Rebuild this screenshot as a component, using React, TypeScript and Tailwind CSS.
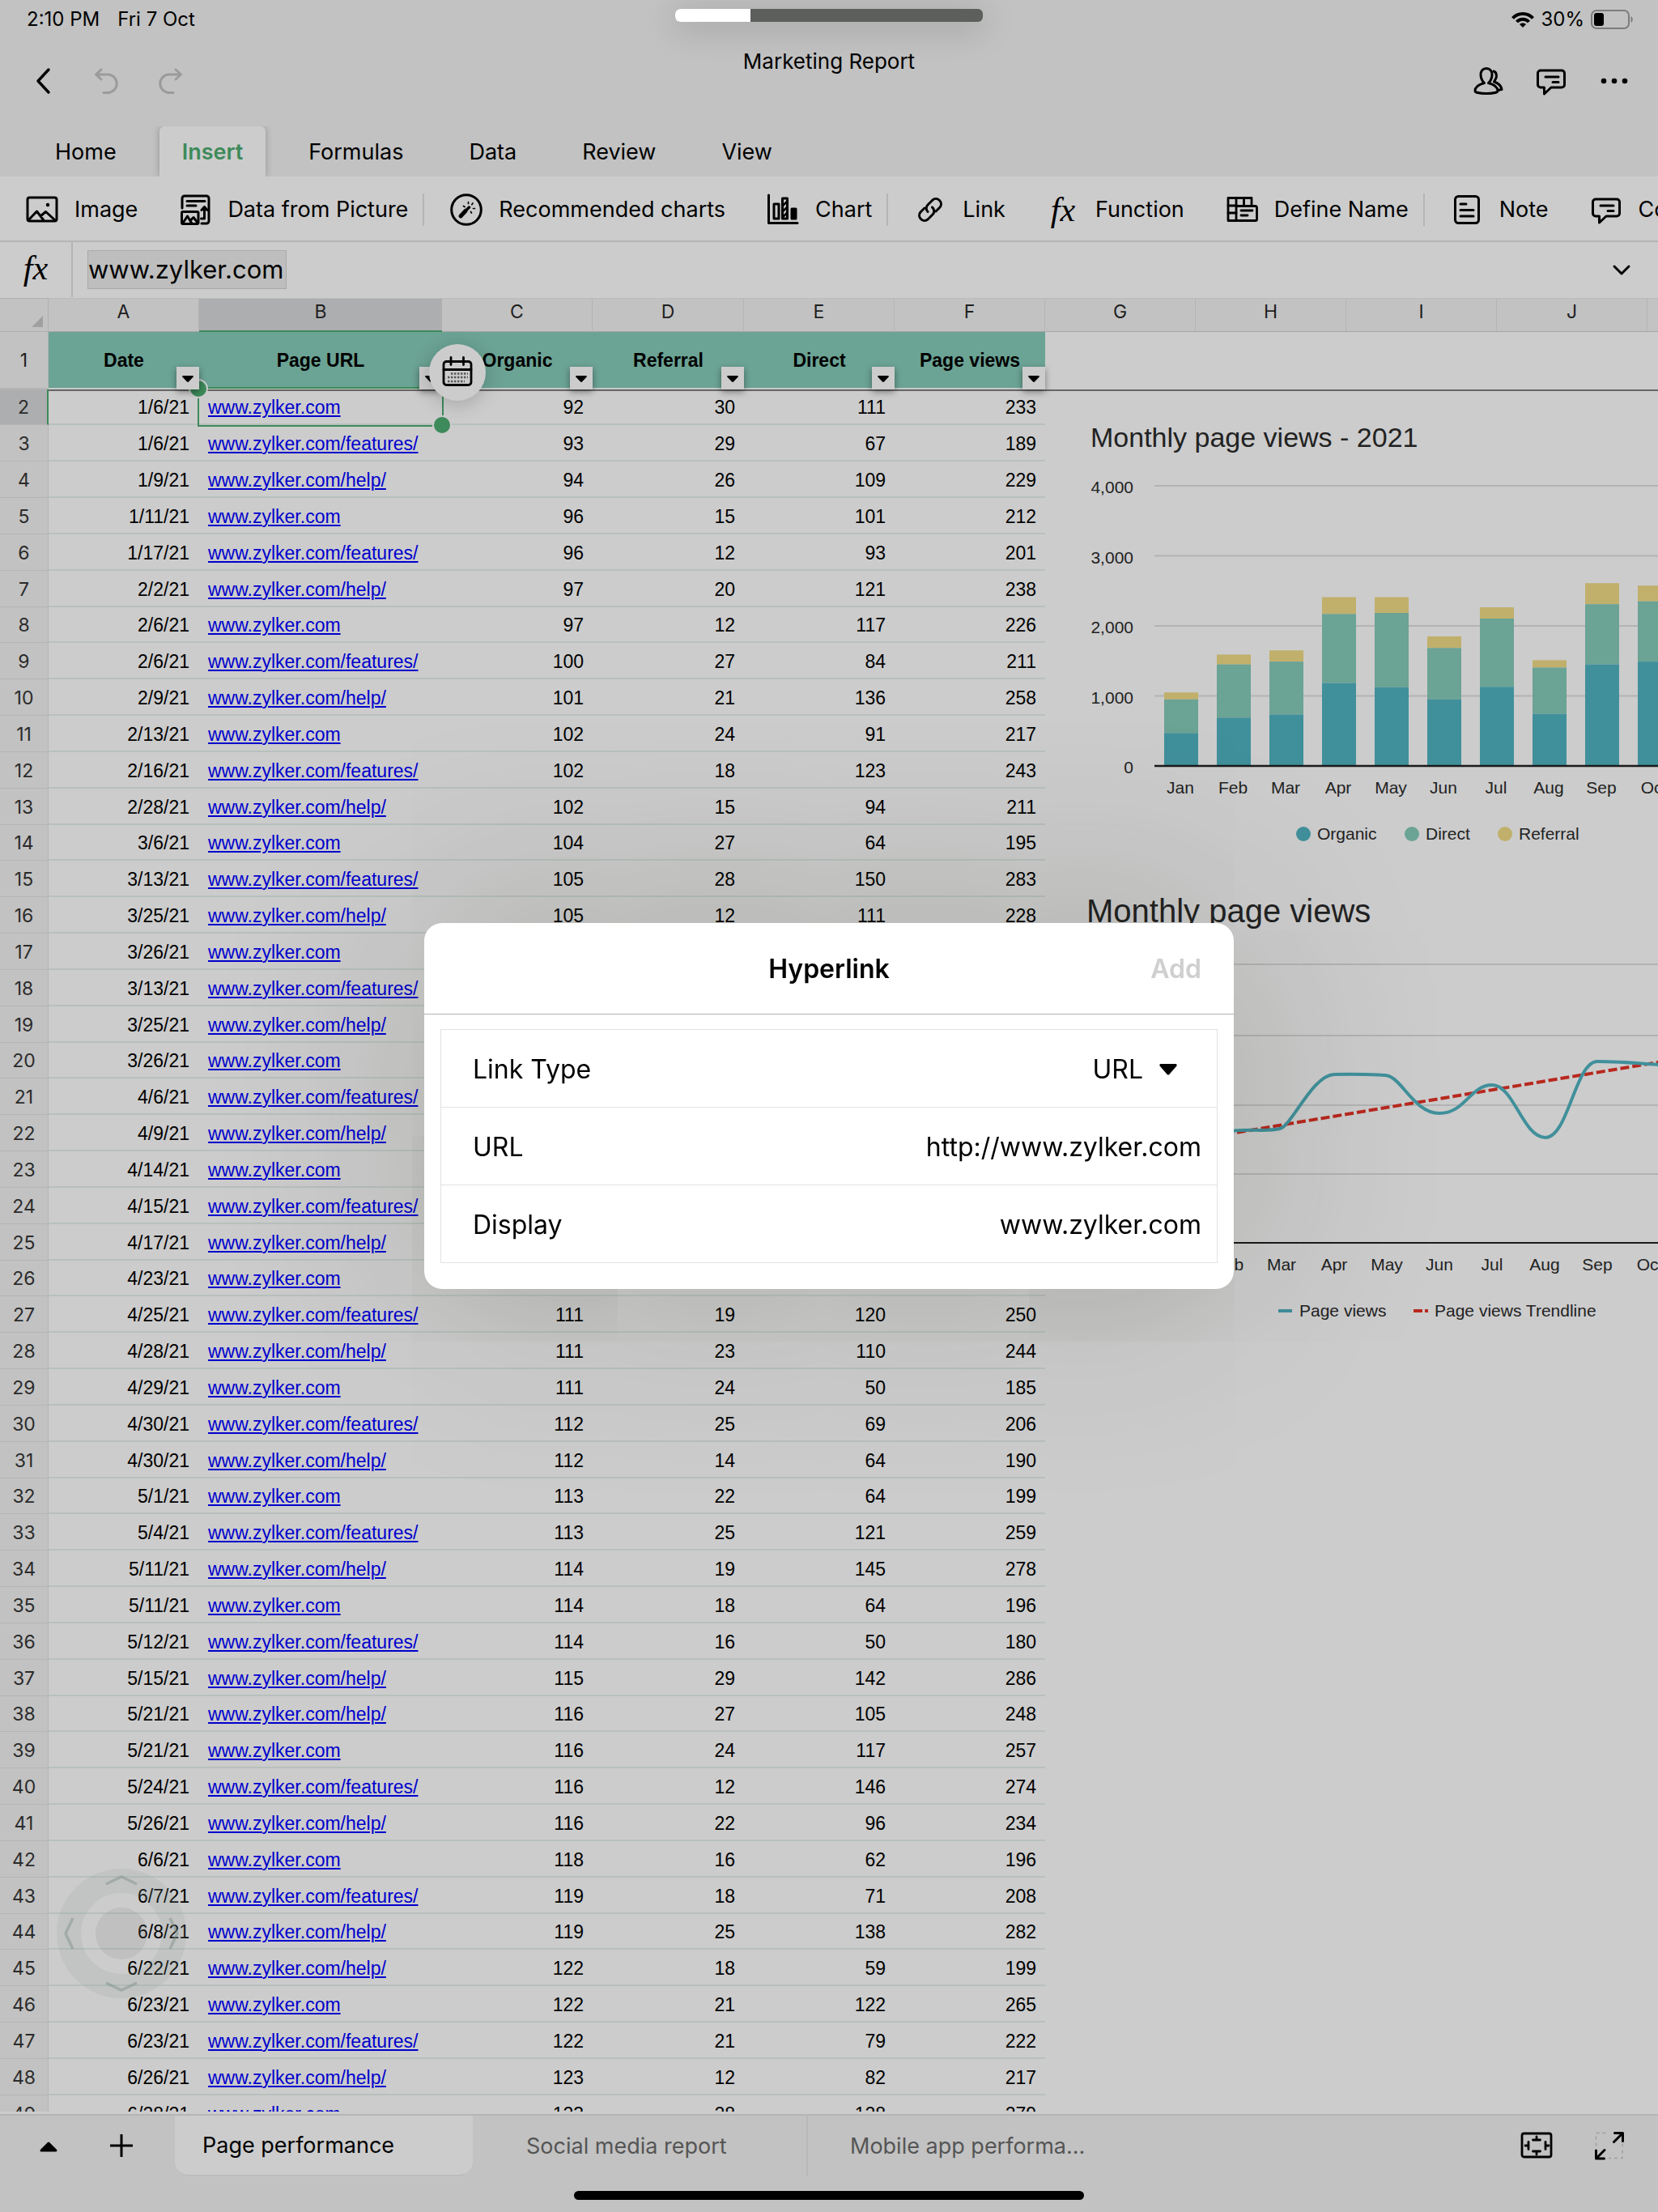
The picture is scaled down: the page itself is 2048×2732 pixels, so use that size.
import type { ReactNode } from "react";

/** Spreadsheet page with the "Hyperlink" dialog open. */

type Row = [string, string, number, number, number, number];

const HOME = "www.zylker.com";
const FEATURES = "www.zylker.com/features/";
const HELP = "www.zylker.com/help/";

const ROWS: Row[] = [
  ["1/6/21", HOME, 92, 30, 111, 233],
  ["1/6/21", FEATURES, 93, 29, 67, 189],
  ["1/9/21", HELP, 94, 26, 109, 229],
  ["1/11/21", HOME, 96, 15, 101, 212],
  ["1/17/21", FEATURES, 96, 12, 93, 201],
  ["2/2/21", HELP, 97, 20, 121, 238],
  ["2/6/21", HOME, 97, 12, 117, 226],
  ["2/6/21", FEATURES, 100, 27, 84, 211],
  ["2/9/21", HELP, 101, 21, 136, 258],
  ["2/13/21", HOME, 102, 24, 91, 217],
  ["2/16/21", FEATURES, 102, 18, 123, 243],
  ["2/28/21", HELP, 102, 15, 94, 211],
  ["3/6/21", HOME, 104, 27, 64, 195],
  ["3/13/21", FEATURES, 105, 28, 150, 283],
  ["3/25/21", HELP, 105, 12, 111, 228],
  ["3/26/21", HOME, 105, 18, 96, 219],
  ["3/13/21", FEATURES, 106, 22, 104, 232],
  ["3/25/21", HELP, 106, 17, 88, 211],
  ["3/26/21", HOME, 107, 20, 75, 202],
  ["4/6/21", FEATURES, 108, 26, 92, 226],
  ["4/9/21", HELP, 108, 14, 118, 240],
  ["4/14/21", HOME, 109, 19, 70, 198],
  ["4/15/21", FEATURES, 109, 25, 99, 233],
  ["4/17/21", HELP, 110, 21, 84, 215],
  ["4/23/21", HOME, 110, 16, 77, 203],
  ["4/25/21", FEATURES, 111, 19, 120, 250],
  ["4/28/21", HELP, 111, 23, 110, 244],
  ["4/29/21", HOME, 111, 24, 50, 185],
  ["4/30/21", FEATURES, 112, 25, 69, 206],
  ["4/30/21", HELP, 112, 14, 64, 190],
  ["5/1/21", HOME, 113, 22, 64, 199],
  ["5/4/21", FEATURES, 113, 25, 121, 259],
  ["5/11/21", HELP, 114, 19, 145, 278],
  ["5/11/21", HOME, 114, 18, 64, 196],
  ["5/12/21", FEATURES, 114, 16, 50, 180],
  ["5/15/21", HELP, 115, 29, 142, 286],
  ["5/21/21", HELP, 116, 27, 105, 248],
  ["5/21/21", HOME, 116, 24, 117, 257],
  ["5/24/21", FEATURES, 116, 12, 146, 274],
  ["5/26/21", HELP, 116, 22, 96, 234],
  ["6/6/21", HOME, 118, 16, 62, 196],
  ["6/7/21", FEATURES, 119, 18, 71, 208],
  ["6/8/21", HELP, 119, 25, 138, 282],
  ["6/22/21", HELP, 122, 18, 59, 199],
  ["6/23/21", HOME, 122, 21, 122, 265],
  ["6/23/21", FEATURES, 122, 21, 79, 222],
  ["6/26/21", HELP, 123, 12, 82, 217],
  ["6/28/21", HOME, 123, 28, 128, 279],
];

const COLUMNS = [
  { letter: "A", title: "Date" },
  { letter: "B", title: "Page URL" },
  { letter: "C", title: "Organic" },
  { letter: "D", title: "Referral" },
  { letter: "E", title: "Direct" },
  { letter: "F", title: "Page views" },
];

const MONTHS = ["Jan", "Feb", "Mar", "Apr", "May", "Jun", "Jul", "Aug", "Sep", "Oct", "Nov", "Dec"];

// organic, direct, referral
const MONTHLY: [number, number, number][] = [
  [470, 480, 100],
  [690, 760, 140],
  [735, 755, 160],
  [1185, 985, 240],
  [1125, 1060, 225],
  [950, 735, 165],
  [1130, 975, 160],
  [745, 660, 105],
  [1450, 860, 300],
  [1490, 860, 225],
  [1300, 800, 200],
  [1350, 820, 210],
];

/* ---------- icons ---------- */

type IconProps = { children: ReactNode; className?: string; width?: number };

function Icon({ children, className = "size-10", width = 3 }: IconProps) {
  return (
    <svg
      viewBox="0 0 40 40"
      className={`shrink-0 ${className}`}
      fill="none"
      stroke="currentColor"
      strokeWidth={width}
      strokeLinecap="round"
      strokeLinejoin="round"
      aria-hidden="true"
    >
      {children}
    </svg>
  );
}

const ImageIcon = () => (
  <Icon>
    <rect x="2" y="5" width="36" height="29" rx="2.500" />
    <path d="M4 32l9.500-10 8 10.500M18 28l6.500-5.500 11 10" />
    <circle cx="27" cy="14" r="1.500" fill="currentColor" strokeWidth="1.500" />
  </Icon>
);

const DataPictureIcon = () => (
  <Icon>
    <path d="M4 18V6a3 3 0 0 1 3-3h27a3 3 0 0 1 3 3v28a3 3 0 0 1-3 3h-6" />
    <path d="M10 9.500h22M10 15h11" />
    <rect x="3.500" y="22.500" width="20.500" height="15" rx="1.500" />
    <path d="M4.500 37l6-9 5.500 9M14.500 33l3.500-3.500 5.500 7" />
    <path d="M27.500 31h4V18M28 20.500l3.500-4 3.500 4" />
  </Icon>
);

const WandIcon = () => (
  <Icon>
    <circle cx="20" cy="20" r="18.300" />
    <path d="M13 28l6-6.500" strokeWidth="5" />
    <path d="M19 21.500l4.500-4.500" strokeWidth="3.500" />
    <path
      d="M22.500 10.500v2M28 12l-1.200 1.700M28.500 18.500h2M25.500 22.500l1 1.500M16.500 15.500l1.500 1"
      strokeWidth="1.700"
    />
  </Icon>
);

const ChartIcon = () => (
  <Icon>
    <path d="M2.500 2v34.500H38" />
    <rect x="9" y="13" width="6" height="18" />
    <rect x="19.500" y="6" width="6" height="25" />
    <path d="M20 15l5-5M20 22l5-5M20 29l5-5" strokeWidth="2.500" />
    <rect x="31" y="19" width="5" height="12" fill="currentColor" />
  </Icon>
);

const LinkIcon = () => (
  <Icon>
    <path d="M17 22.500a6 6 0 0 1 0-8.500l6-6a6.400 6.400 0 0 1 9 9l-5 5" />
    <path d="M22.500 17a6 6 0 0 1 .5 9l-6 6a6.400 6.400 0 0 1-9-9l5-5" />
  </Icon>
);

const DefineIcon = () => (
  <Icon width={2.8}>
    <path d="M32 15V5.500H3v28h34a1.500 1.500 0 0 0 1.500-1.500V17.500a2 2 0 0 0-2-2H15a2 2 0 0 0-2 2v16" />
    <path d="M3 15h11M3 24h10M13 5.500V16M22.500 5.500V15" />
    <path d="M19 21h14M19 27h8" />
  </Icon>
);

const NoteIcon = () => (
  <Icon>
    <rect x="5.500" y="3.500" width="29" height="33" rx="4" />
    <path d="M12 13h7M12 20.500h16M12 28h16" />
  </Icon>
);

const CommentIcon = () => (
  <Icon>
    <path d="M7 7h26a3.500 3.500 0 0 1 3.500 3.500v14a3.500 3.500 0 0 1-3.500 3.500H20l-8.500 8v-8H7a3.500 3.500 0 0 1-3.500-3.500v-14A3.500 3.500 0 0 1 7 7z" />
    <path d="M13 15h16M22 21.500h7" />
  </Icon>
);

const PeopleIcon = () => (
  <Icon>
    <path d="M18 4.500c-4.500 0-7 3.500-7 8 0 5 3 9 4.500 10-6 1.500-11.500 4.500-11.500 10 0 1.500 6 3 14 3s14-1.500 14-3c0-5.500-5.500-8.500-11.500-10 1.500-1 4.500-5 4.500-10 0-4.500-2.500-8-7-8z" />
    <path d="M27 8c3 1 3.500 3.500 3.500 6 0 3-2 5.500-3 7 4.500 1.500 8.500 3.500 9.500 9.500-1 0-2 .5-4.500 1" />
  </Icon>
);

const CalendarIcon = () => (
  <Icon width={2.8}>
    <rect x="3" y="6.500" width="34" height="29" rx="3.500" />
    <path d="M3 16.500h34M12 1.500v9M27.500 1.500v9" />
    <path
      d="M12 21.500h21M8 26h25M8 31h21"
      stroke="#555"
      strokeWidth="2.400"
      strokeLinecap="butt"
      strokeDasharray="2.400 1.600"
    />
  </Icon>
);

const UndoIcon = () => (
  <Icon>
    <path d="M13 6l-6.500 6L13 18M7 12h15a11.300 11.300 0 0 1 0 22.500h-6" />
  </Icon>
);

const RedoIcon = () => (
  <Icon>
    <path d="M27 6l6.500 6L27 18M33 12H18a11.300 11.300 0 0 0 0 22.500h6" />
  </Icon>
);

const FitIcon = () => (
  <Icon width={2.8}>
    <rect x="2" y="5" width="36" height="29" rx="2.500" />
    <path d="M15.500 13h9M15.500 27h9M10 15.500v9M31 15.500v9M20 9v4M20 27v4M6 20h4M31 20h4" />
  </Icon>
);

const ExpandIcon = () => (
  <Icon>
    <path d="M3.500 20V4.500H20M36 18v17.500H20" strokeWidth="1.500" stroke="#a0a0a0" strokeDasharray="3 5" />
    <path d="M26.500 4.500h10v10M36 5L25.500 15.500M3.500 26v10h10M4 35.500l10-10" />
  </Icon>
);

const FxGlyph = () => <span className="font-['Liberation_Serif',serif] text-[42px] leading-10 italic">fx</span>;

/* ---------- header ---------- */

function StatusBar() {
  return (
    <div className="flex h-12 items-center justify-between pr-[29px] pl-[33px] text-[24px]">
      <div className="flex gap-[22px]">
        <span>2:10 PM</span>
        <span>Fri 7 Oct</span>
      </div>
      <div className="flex items-center gap-2">
        <svg viewBox="0 0 28 21" className="h-[21px] w-7" fill="none" stroke="currentColor" strokeWidth="4" aria-label="Wi-Fi">
          <path d="M1.500 8.500C8 1 20 1 26.500 8.500M6.500 13c4-4.500 11-4.500 15 0" />
          <path d="M14 20l-4-4c2-2 6-2 8 0z" fill="currentColor" stroke="none" />
        </svg>
        <span>30%</span>
        <svg viewBox="0 0 54 24" className="h-6 w-[54px]" aria-label="Battery">
          <rect x="1" y="1" width="46" height="22" rx="6" fill="none" stroke="#7c7c7c" strokeWidth="2" />
          <rect x="4" y="4" width="12" height="16" rx="3" />
          <path d="M49.500 8c3 1.500 3 6.500 0 8z" fill="#7c7c7c" />
        </svg>
      </div>
    </div>
  );
}

function NavBar() {
  return (
    <div className="grid h-[104px] grid-cols-3 items-center">
      <div className="flex items-center pl-8">
        <button type="button" aria-label="Back">
          <Icon width={3.4}>
            <path d="M28 6L15 20l13 14" />
          </Icon>
        </button>
        <button type="button" aria-label="Undo" className="ml-10 text-[#9b9b9b]">
          <UndoIcon />
        </button>
        <button type="button" aria-label="Redo" className="ml-[38px] text-[#9b9b9b]">
          <RedoIcon />
        </button>
      </div>
      <h1 className="mt-3 self-start text-center text-[26px] leading-8">Marketing Report</h1>
      <div className="flex items-center justify-end gap-[38px] pr-[34px]">
        <button type="button" aria-label="Share">
          <PeopleIcon />
        </button>
        <button type="button" aria-label="Comments">
          <CommentIcon />
        </button>
        <button type="button" aria-label="More">
          <Icon>
            <g fill="currentColor" stroke="none">
              <circle cx="7" cy="20" r="3.300" />
              <circle cx="20" cy="20" r="3.300" />
              <circle cx="33" cy="20" r="3.300" />
            </g>
          </Icon>
        </button>
      </div>
    </div>
  );
}

const TABS = ["Home", "Insert", "Formulas", "Data", "Review", "View"];

function TabBar() {
  return (
    <nav className="mt-1 flex h-[62px] gap-[25px] overflow-hidden pl-10 text-[27px]">
      {TABS.map((tab) => (
        <button
          key={tab}
          type="button"
          className={
            tab === "Insert"
              ? "rounded-t-md bg-[#cccccc] px-7 pt-[3px] font-semibold text-[#3d8a5a] shadow-[0_0_8px_rgba(0,0,0,0.25)]"
              : "px-7 pt-[3px]"
          }
        >
          {tab}
        </button>
      ))}
    </nav>
  );
}

function Tool({ icon, label }: { icon: ReactNode; label: string }) {
  return (
    <button type="button" className="flex shrink-0 items-center gap-5 whitespace-nowrap">
      <span className="flex w-10 justify-center">{icon}</span>
      {label}
    </button>
  );
}

function ToolGroup({ children }: { children: ReactNode }) {
  return (
    <div className="flex h-10 shrink-0 items-center gap-[51px] border-r-2 border-[#b5b5b5] pr-[18px] pl-8 last:border-r-0">
      {children}
    </div>
  );
}

function Toolbar() {
  return (
    <div className="flex h-[81px] items-center overflow-hidden border-b-2 border-[#b5b5b5] bg-[#cccccc] pt-[3px] text-[27px]">
      <ToolGroup>
        <Tool icon={<ImageIcon />} label="Image" />
        <Tool icon={<DataPictureIcon />} label="Data from Picture" />
      </ToolGroup>
      <ToolGroup>
        <Tool icon={<WandIcon />} label="Recommended charts" />
        <Tool icon={<ChartIcon />} label="Chart" />
      </ToolGroup>
      <ToolGroup>
        <Tool icon={<LinkIcon />} label="Link" />
        <Tool icon={<FxGlyph />} label="Function" />
        <Tool icon={<DefineIcon />} label="Define Name" />
      </ToolGroup>
      <ToolGroup>
        <Tool icon={<NoteIcon />} label="Note" />
        <Tool icon={<CommentIcon />} label="Comment" />
      </ToolGroup>
    </div>
  );
}

function FormulaBar() {
  return (
    <div className="flex h-[69px] items-center bg-[#cccccc] pb-0.5">
      <div className="flex h-[69px] w-[90px] items-center justify-center border-r-2 border-[#b5b5b5] pb-1">
        <FxGlyph />
      </div>
      <div className="flex flex-1 items-center pl-[18px]">
        <input
          aria-label="Formula"
          defaultValue="www.zylker.com"
          className="h-12 w-[246px] border border-[#a9a9a9] bg-[#bebebe] text-[31px] outline-none"
        />
      </div>
      <button type="button" aria-label="Expand formula bar" className="mr-[25px]">
        <Icon>
          <path d="M11 16l9 9 9-9" />
        </Icon>
      </button>
    </div>
  );
}

/* ---------- sheet ---------- */

function HeaderCell({ title }: { title: string }) {
  const selected = title === "Page URL";
  return (
    <th scope="col" className="relative border-b-2 border-b-[#c4cbc8] bg-[#6ba394] bg-clip-padding p-0 font-bold">
      {title}
      <button
        type="button"
        aria-label={`Filter ${title}`}
        className="absolute right-0 -bottom-[2px] z-10 flex h-7 w-7 items-center justify-center bg-[#cccccc] shadow-[0_3px_8px_rgba(0,0,0,0.4)]"
      >
        <svg viewBox="0 0 14 8" className="mt-0.5 h-2 w-[14px]" aria-hidden="true">
          <path d="M1 0h12a1 1 0 0 1 .7 1.600L8 7.500a1.400 1.400 0 0 1-2 0L.3 1.600A1 1 0 0 1 1 0z" />
        </svg>
      </button>
      {selected && (
        <button
          type="button"
          aria-label="Insert date"
          className="absolute -right-[54px] bottom-[-16px] z-20 flex size-[70px] items-center justify-center rounded-full bg-[#cccccc] shadow-[0_4px_24px_rgba(0,0,0,0.2)]"
        >
          <CalendarIcon />
        </button>
      )}
    </th>
  );
}

function SelectionFrame() {
  return (
    <span className="pointer-events-none absolute -top-[5px] -right-[2px] -bottom-[4px] -left-[2px] border-2 border-[#3d8a5a]">
      <span className="absolute -top-[12px] -left-[13px] size-6 rounded-full border-2 border-[#cccccc] bg-[#3d8a5a]" />
      <span className="absolute -right-[12px] -bottom-[12px] size-6 rounded-full border-2 border-[#cccccc] bg-[#3d8a5a]" />
    </span>
  );
}

function SheetTable() {
  return (
    <table className="w-[1291px] shrink-0 table-fixed border-separate border-spacing-0 self-start font-['Liberation_Sans',Arial,sans-serif] text-[23px] leading-7">
      <colgroup>
        <col className="w-[60px]" />
        <col className="w-[186px]" />
        <col className="w-[300px]" />
        <col className="w-[186px]" />
        <col className="w-[187px]" />
        <col className="w-[186px]" />
        <col className="w-[186px]" />
      </colgroup>
      <thead>
        <tr className="h-[42px] bg-[#c2c2c2] font-['Inter',sans-serif] text-[#1f1f1f]">
          <th className="border-y border-r border-[#b0b0b0] p-0">
            <svg viewBox="0 0 14 14" className="mt-4 mr-1.5 ml-auto size-[14px]" fill="#a0a0a0" aria-hidden="true">
              <path d="M14 0v14H0z" />
            </svg>
          </th>
          {COLUMNS.map(({ letter }) => (
            <th
              key={letter}
              className={`border-t border-b border-t-[#bcbcbc] p-0 pb-2 font-normal ${
                letter === "B"
                  ? "border-b-2 border-b-[#3d8a5a] bg-[#adaeb0]"
                  : "border-r border-r-[#b5b5b5] border-b-[#a5a5a5]"
              }`}
            >
              {letter}
            </th>
          ))}
        </tr>
        <tr className="h-[71px]">
          <th
            scope="row"
            className="border-r border-b-2 border-[#b5b5b5] bg-[#c2c2c2] p-0 font-['Inter',sans-serif] font-normal text-[#1f1f1f]"
          >
            1
          </th>
          {COLUMNS.map(({ title }) => (
            <HeaderCell key={title} title={title} />
          ))}
        </tr>
      </thead>
      <tbody>
        {ROWS.map(([date, url, ...counts], i) => {
          const first = i === 0;
          const cell = `border-b-2 border-b-[#b8c0bd] p-0 ${first ? "border-t-2 border-t-[#666666]" : "pt-0.5"}`;
          return (
            // every sixth row is a pixel shorter
            <tr key={i} className={i % 6 === 0 ? "h-[44px]" : "h-[45px]"}>
              <th
                scope="row"
                className={`border-b border-b-[#b5b5b5] p-0 pt-px font-['Inter',sans-serif] font-normal text-[#2b2b2b] ${
                  first ? "border-r-2 border-r-[#3d8a5a] bg-[#adaeb0]" : "border-r border-r-[#b5b5b5] bg-[#c2c2c2]"
                }`}
              >
                {i + 2}
              </th>
              <td className={`${cell} pr-3 text-right`}>{date}</td>
              <td className={`${cell} relative pl-[11px]`}>
                <a href={`http://${url}`} className="text-[#0000cc] underline decoration-2 underline-offset-2">
                  {url}
                </a>
                {first && <SelectionFrame />}
              </td>
              {counts.map((n, c) => (
                <td key={c} className={`${cell} pr-[11px] text-right`}>
                  {n}
                </td>
              ))}
            </tr>
          );
        })}
      </tbody>
    </table>
  );
}

/* ---------- charts ---------- */

const STEP = 65;

function BarChart() {
  const y = (v: number) => 345 - v * 0.0865;
  const ticks = [4000, 3000, 2000, 1000, 0];
  return (
    <svg
      viewBox="0 0 860 460"
      className="h-[460px] w-[860px] max-w-none overflow-visible font-['Liberation_Sans',Arial,sans-serif]"
      fontSize="21"
      fill="#222"
      role="img"
      aria-label="Monthly page views - 2021"
    >
      {ticks.map((t) => (
        <g key={t}>
          <line x1="135" x2="860" y1={y(t)} y2={y(t)} stroke="#b3b3b3" strokeWidth="2" />
          <text x="109" y={y(t) + 9} textAnchor="end">
            {t.toLocaleString("en-US")}
          </text>
        </g>
      ))}
      {MONTHLY.map(([organic, direct, referral], i) => {
        const x = 147 + i * STEP;
        return (
          <g key={MONTHS[i]}>
            <rect x={x} width="42" y={y(organic + direct + referral)} height={referral * 0.0865} fill="#c1b06c" />
            <rect x={x} width="42" y={y(organic + direct)} height={direct * 0.0865} fill="#6ba394" />
            <rect x={x} width="42" y={y(organic)} height={organic * 0.0865} fill="#40909b" />
            <text x={x + 20} y="379" textAnchor="middle">
              {MONTHS[i]}
            </text>
          </g>
        );
      })}
      <line x1="135" x2="860" y1="345" y2="345" stroke="#1a1a1a" strokeWidth="2.500" />
      <circle cx="319" cy="429" r="9" fill="#40909b" />
      <text x="336" y="436">
        Organic
      </text>
      <circle cx="453" cy="429" r="9" fill="#6ba394" />
      <text x="470" y="436">
        Direct
      </text>
      <circle cx="568" cy="429" r="9" fill="#c1b06c" />
      <text x="585" y="436">
        Referral
      </text>
    </svg>
  );
}

function LineChart() {
  return (
    <svg
      viewBox="0 0 860 480"
      className="h-[480px] w-[860px] max-w-none font-['Liberation_Sans',Arial,sans-serif]"
      fontSize="21"
      fill="#222"
      role="img"
      aria-label="Monthly page views"
    >
      {[31, 119, 205, 290].map((y) => (
        <line key={y} x1="120" x2="860" y1={y} y2={y} stroke="#b3b3b3" strokeWidth="2" />
      ))}
      <path d="M163 251L757 152L830 140" fill="none" stroke="#b8281e" strokeWidth="4" strokeDasharray="11 4" />
      <path
        d="M164 284C190 270 205 240 229 237S275 238 290 234S330 168 357 167S400 167 420 168S455 215 487 215S525 180 552 180S590 245 618 245S655 151 682 151S720 152 757 155S800 170 830 190"
        fill="none"
        stroke="#40909b"
        strokeWidth="4"
      />
      <line x1="120" x2="860" y1="375" y2="375" stroke="#1a1a1a" strokeWidth="2" />
      {MONTHS.map((m, i) => (
        <text key={m} x={162 + i * STEP} y="409" textAnchor="middle">
          {m}
        </text>
      ))}
      <path d="M288 459h17" stroke="#40909b" strokeWidth="4" />
      <text x="314" y="466">
        Page views
      </text>
      <path d="M455 459h18" stroke="#b8281e" strokeWidth="4" strokeDasharray="11 3" />
      <text x="481" y="466">
        Page views Trendline
      </text>
    </svg>
  );
}

function ChartArea() {
  return (
    <section className="min-w-0 flex-1 overflow-hidden">
      <div className="flex h-[42px] border-y border-t-[#bcbcbc] border-b-[#a5a5a5] bg-[#c2c2c2] text-[23px] leading-[32px] text-[#1f1f1f]">
        {["G", "H", "I", "J", ""].map((letter, i) => (
          <div key={i} className="w-[186px] shrink-0 border-r border-[#b5b5b5] text-center">
            {letter}
          </div>
        ))}
      </div>
      <div className="h-[73px] border-b-2 border-[#666666]" />
      <h2 className="pt-[35px] pl-14 font-['Liberation_Sans',Arial,sans-serif] text-[34px] leading-[44px] text-[#222]">
        Monthly page views - 2021
      </h2>
      <div className="mt-[39px]">
        <BarChart />
      </div>
      <h2 className="mt-[42px] pl-[51px] font-['Liberation_Sans',Arial,sans-serif] text-[40px] leading-[44px] text-[#222]">
        Monthly page views
      </h2>
      <div className="mt-[13px]">
        <LineChart />
      </div>
    </section>
  );
}

function JoyPad() {
  return (
    <svg viewBox="0 0 160 160" className="absolute bottom-[140px] left-[70px] size-[160px]" fill="none" aria-hidden="true">
      <circle cx="80" cy="80" r="65" stroke="#8fa39b" strokeOpacity="0.180" strokeWidth="30" />
      <circle cx="80" cy="80" r="32" fill="#888" fillOpacity="0.180" />
      <g stroke="#7d8f88" strokeOpacity="0.450" strokeWidth="3.500">
        <path d="M61 19l19-9 19 9M61 141l19 9 19-9M20 61l-9 19 9 19M140 61l9 19-9 19" />
      </g>
    </svg>
  );
}

/* ---------- footer ---------- */

function SheetTabs() {
  return (
    <footer className="flex h-[121px] flex-col border-t-2 border-[#b5b5b5] bg-[#c2c2c2] text-[27px]">
      <div className="flex h-[74px] shrink-0 items-stretch">
        <button type="button" aria-label="All sheets" className="ml-10">
          <Icon>
            <path d="M11 26l9-9 9 9z" fill="currentColor" />
          </Icon>
        </button>
        <button type="button" aria-label="Add sheet" className="mr-[46px] ml-[50px]">
          <Icon>
            <path d="M20 6v28M6 20h28" strokeLinecap="butt" />
          </Icon>
        </button>
        <button
          type="button"
          className="w-[368px] rounded-b-2xl border-b border-[#b8b8b8] bg-[#cccccc] pt-0.5 pl-[34px] text-left"
        >
          Page performance
        </button>
        <button type="button" className="w-[414px] border-r-2 border-[#b8b8b8] pt-0.5 pl-[66px] text-left text-[#555555]">
          Social media report
        </button>
        <button type="button" className="pt-0.5 pl-[52px] text-left text-[#555555]">
          Mobile app performa...
        </button>
        <div className="ml-auto flex items-center gap-[50px] pr-10">
          <button type="button" aria-label="Fit to screen">
            <FitIcon />
          </button>
          <button type="button" aria-label="Full screen">
            <ExpandIcon />
          </button>
        </div>
      </div>
      <div className="mx-auto mt-[19px] h-[11px] w-[630px] rounded-full bg-black" />
    </footer>
  );
}

/* ---------- dialog ---------- */

function HyperlinkDialog() {
  const row = "flex h-24 items-center justify-between border-b border-[#e2e2e2] pt-0.5 pr-[19px] pl-[39px]";
  const field = "w-[400px] bg-transparent text-right outline-none";
  return (
    <div className="fixed inset-0 flex items-center justify-center">
      <form
        role="dialog"
        aria-labelledby="dialog-title"
        className="w-[1000px] rounded-[22px] bg-white pb-8 text-[32px] shadow-[0_0_280px_rgba(20,30,0,0.24)]"
      >
        <div className="grid h-[113px] grid-cols-3 items-center border-b border-[#b2b2b2] px-10 pt-0.5 font-semibold">
          <h2 id="dialog-title" className="col-start-2 text-center">
            Hyperlink
          </h2>
          <button type="button" className="justify-self-end text-[#cfcfcf]">
            Add
          </button>
        </div>
        <div className="mx-5 mt-[18px] border-x border-t border-[#e2e2e2]">
          <div className={row}>
            <label htmlFor="link-type">Link Type</label>
            <div className="flex items-center gap-5 pr-[30px]">
              <select id="link-type" className="appearance-none bg-transparent text-right outline-none">
                <option>URL</option>
              </select>
              <svg viewBox="0 0 22 14" className="h-[14px] w-[22px]" aria-hidden="true">
                <path d="M2 0h18c1.500 0 2.200 1.500 1.200 2.700l-8.700 10a2 2 0 0 1-3 0L.8 2.700C-.2 1.500.5 0 2 0z" />
              </svg>
            </div>
          </div>
          <div className={row}>
            <label htmlFor="link-url">URL</label>
            <input id="link-url" defaultValue="http://www.zylker.com" className={field} />
          </div>
          <div className={row}>
            <label htmlFor="link-display">Display</label>
            <input id="link-display" defaultValue="www.zylker.com" className={field} />
          </div>
        </div>
      </form>
    </div>
  );
}

export default function App() {
  return (
    <div className="relative flex h-screen flex-col bg-[#cccccc] font-['Inter',sans-serif] text-black">
      <header className="bg-[#c2c2c2]">
        <StatusBar />
        <NavBar />
        <TabBar />
      </header>
      <Toolbar />
      <FormulaBar />
      <main className="relative mb-[3px] flex min-h-0 flex-1 items-start overflow-hidden">
        <SheetTable />
        <ChartArea />
        <JoyPad />
      </main>
      <SheetTabs />
      <div className="absolute top-[11px] left-1/2 h-4 w-[380px] -translate-x-1/2 overflow-hidden rounded-md bg-[#5d5f5d] shadow-[0_6px_40px_rgba(0,0,0,0.25)]">
        <div className="h-full w-[93px] bg-white" />
      </div>
      <HyperlinkDialog />
    </div>
  );
}
